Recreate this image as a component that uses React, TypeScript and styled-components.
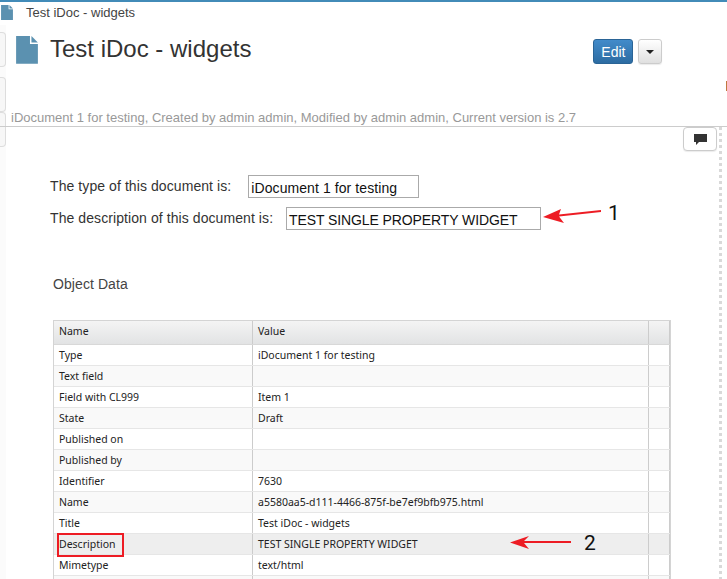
import styled, { createGlobalStyle } from "styled-components";

const rows = [
  { name: "Type", value: "iDocument 1 for testing" },
  { name: "Text field", value: "" },
  { name: "Field with CL999", value: "Item 1" },
  { name: "State", value: "Draft" },
  { name: "Published on", value: "" },
  { name: "Published by", value: "" },
  { name: "Identifier", value: "7630" },
  { name: "Name", value: "a5580aa5-d111-4466-875f-be7ef9bfb975.html" },
  { name: "Title", value: "Test iDoc - widgets" },
  { name: "Description", value: "TEST SINGLE PROPERTY WIDGET", selected: true },
  { name: "Mimetype", value: "text/html" },
  { name: "", value: "" },
];

const GlobalStyle = createGlobalStyle`
  html, body {
    margin: 0;
    padding: 0;
    background: #fff;
    overflow: hidden;
  }
`;

const DocIcon = ({ size }: { size: number }) => (
  <svg width={size} height={size * 1.26} viewBox="0 0 22 28">
    <path d="M0 0H14V8H22V28H0Z" fill="#5b91b0" />
    <path d="M15.5 0L22 6.5H15.5Z" fill="#5b91b0" />
  </svg>
);

const Arrow = ({ width, height, d }: { width: number; height: number; d: string }) => (
  <svg width={width} height={height} viewBox={`0 0 ${width} ${height}`}>
    <path d={d} fill="#ed1c24" />
  </svg>
);

const App = () => {
  return (
    <Page>
      <GlobalStyle />
      <TabBar>
        <DocIcon size={12} />
        <TabTitle>Test iDoc - widgets</TabTitle>
      </TabBar>
      <Main>
        <Rail>
          <RailTab $gap={0} />
          <RailTab $gap={10} />
          <RailTab $gap={0} />
        </Rail>
        <Content>
          <Header>
            <TitleRow>
              <DocIcon size={22} />
              <Title>Test iDoc - widgets</Title>
              <Actions>
                <EditButton>Edit</EditButton>
                <CaretButton>
                  <Caret />
                </CaretButton>
              </Actions>
            </TitleRow>
            <Meta>
              iDocument 1 for testing, Created by admin admin, Modified by admin admin, Current
              version is 2.7
            </Meta>
            <EdgeMark />
          </Header>
          <Body>
            <CommentBar>
              <CommentButton>
                <svg width="13" height="11" viewBox="0 0 13 11">
                  <path d="M0 0H13V8H5L2 11V8H0Z" fill="#333" />
                </svg>
              </CommentButton>
            </CommentBar>
            <Sentence $first>
              The type of this document is:
              <ValueBox $width={171} $gap={17} $spacing={0.08}>iDocument 1 for testing</ValueBox>
            </Sentence>
            <AnnotatedRow>
              <Sentence>
                The description of this document is:
                <ValueBox $width={255} $gap={13} $spacing={-0.1}>TEST SINGLE PROPERTY WIDGET</ValueBox>
              </Sentence>
              <ArrowSlot $x={2}>
                <Arrow width={60} height={14} d="M0 8L18 0L16 5.5L58 1L58 3L16 7.5L21 14Z" />
              </ArrowSlot>
              <Callout $x={5} $y={-4}>1</Callout>
            </AnnotatedRow>
            <SectionTitle>Object Data</SectionTitle>
            <Table>
              <HeadRow>
                <HeadCell $width={199}>Name</HeadCell>
                <HeadCell $width={396}>Value</HeadCell>
                <HeadCell $width={21} />
              </HeadRow>
              {rows.map((row, index) => (
                <Row key={index} $odd={index % 2 === 1} $selected={!!row.selected}>
                  <Cell $width={199}>
                    {row.name}
                    {row.selected && <Highlight />}
                  </Cell>
                  <Cell $width={396}>
                    {row.value}
                    {row.selected && (
                      <RowCallout>
                        <Arrow width={62} height={14} d="M0 6.5L19 0L14 5L61 5L61 7L14 7L19 13Z" />
                        <Callout $x={12} $y={0}>2</Callout>
                      </RowCallout>
                    )}
                  </Cell>
                  <Cell $width={21} />
                </Row>
              ))}
            </Table>
          </Body>
        </Content>
        <DottedEdge />
      </Main>
    </Page>
  );
};

export default App;

const Page = styled.div`
  width: 727px;
  height: 579px;
  overflow: hidden;
  background: #fff;
  border-top: 2px solid #428bb8;
  box-sizing: border-box;
  font-family: "Liberation Sans", Arial, sans-serif;
  color: #333;
`;

const TabBar = styled.div`
  display: flex;
  align-items: center;
  gap: 13px;
  height: 23px;
  margin-left: 1px;
  padding-bottom: 1px;
  box-sizing: border-box;
`;

const TabTitle = styled.span`
  margin-top: -2px;
  font-size: 13px;
  color: #444;
`;

const Main = styled.div`
  display: flex;
  height: 554px;
`;

const Rail = styled.div`
  flex: 0 0 6px;
  display: flex;
  flex-direction: column;
  padding-top: 7px;
  background: #fbfbfb;
`;

const RailTab = styled.div<{ $gap: number }>`
  height: 35px;
  margin-top: ${(p) => p.$gap}px;
  background: #f7f7f7;
  border: 1px solid #ddd;
  border-left: none;
  border-radius: 0 4px 4px 0;
  box-sizing: border-box;
`;

const Content = styled.div`
  flex: 0 0 712px;
  display: flex;
  flex-direction: column;
  min-width: 0;
`;

const Header = styled.div`
  height: 102px;
  margin-left: -6px;
  padding-left: 16px;
  border-bottom: 1px solid #ccc;
  position: relative;
  box-sizing: border-box;
  width: 727px;
`;

const TitleRow = styled.div`
  display: flex;
  align-items: flex-start;
  height: 85px;
  padding-top: 11px;
  box-sizing: border-box;
`;

const Title = styled.h1`
  margin: -1px 0 0 12px;
  font-size: 24px;
  font-weight: 400;
  line-height: 28px;
  color: #333;
`;

const Actions = styled.div`
  display: flex;
  gap: 5px;
  margin-left: 342px;
  margin-top: 3px;
`;

const EditButton = styled.button`
  width: 40px;
  height: 25px;
  padding: 0;
  border: 1px solid #2a6496;
  border-radius: 3px;
  background: linear-gradient(#428bca, #2d6ca2);
  color: #fff;
  font: 14px "Liberation Sans", Arial, sans-serif;
`;

const CaretButton = styled.button`
  width: 24px;
  height: 25px;
  padding: 0;
  display: flex;
  align-items: center;
  justify-content: center;
  border: 1px solid #ccc;
  border-radius: 3px;
  background: linear-gradient(#fff, #e0e0e0);
  box-shadow: 0 1px 1px rgba(0, 0, 0, 0.08);
`;

const Caret = styled.span`
  width: 0;
  height: 0;
  border-left: 4px solid transparent;
  border-right: 4px solid transparent;
  border-top: 4px solid #222;
`;

const Meta = styled.div`
  margin-left: -5px;
  font-size: 13px;
  line-height: 15px;
  color: #999;
  white-space: nowrap;
`;

const EdgeMark = styled.span`
  position: absolute;
  right: 0;
  top: 56px;
  width: 1px;
  height: 10px;
  background: #c07840;
`;

const Body = styled.div`
  flex: 1;
  min-height: 0;
  padding-left: 47px;
  position: relative;
`;

const CommentBar = styled.div`
  position: absolute;
  top: 0;
  right: 1px;
`;

const CommentButton = styled.div`
  width: 34px;
  height: 24px;
  display: flex;
  align-items: center;
  justify-content: center;
  background: #fff;
  border: 1px solid #ccc;
  border-radius: 4px;
  box-shadow: 0 1px 1px rgba(0, 0, 0, 0.08);
  box-sizing: border-box;
`;

const Sentence = styled.div<{ $first?: boolean }>`
  display: flex;
  align-items: flex-start;
  margin-top: ${(p) => (p.$first ? "48px" : "0")};
  margin-left: -3px;
  font-size: 14px;
  line-height: 22px;
  letter-spacing: 0.08px;
  color: #333;
  white-space: nowrap;
`;

const ValueBox = styled.div<{ $width: number; $gap: number; $spacing: number }>`
  width: ${(p) => p.$width}px;
  height: 23px;
  margin-left: ${(p) => p.$gap}px;
  padding: 1px 0 0 2px;
  border: 1px solid #aaa;
  box-sizing: border-box;
  letter-spacing: ${(p) => p.$spacing}px;
  color: #111;
`;

const AnnotatedRow = styled.div`
  display: flex;
  align-items: flex-start;
  margin-top: 9px;
`;

const ArrowSlot = styled.div<{ $x: number }>`
  margin: 2px 0 0 ${(p) => p.$x}px;
  display: flex;
`;

const Callout = styled.span<{ $x: number; $y: number }>`
  margin: ${(p) => p.$y}px 0 0 ${(p) => p.$x}px;
  font-family: Roboto, Arial, sans-serif;
  font-size: 21px;
  line-height: 20px;
  color: #111;
`;

const SectionTitle = styled.div`
  margin-top: 45px;
  font-size: 14px;
  line-height: 18px;
  letter-spacing: 0.08px;
  color: #444;
`;

const Table = styled.div`
  width: 618px;
  margin-top: 27px;
  border: 1px solid #d4d4d4;
  border-bottom: none;
  box-sizing: border-box;
  font-family: "Noto Sans", Tahoma, sans-serif;
  font-size: 10.5px;
  color: #222;
`;

const HeadRow = styled.div`
  display: flex;
  height: 24px;
  background: linear-gradient(#f4f4f4, #e2e3e4);
  border-bottom: 1px solid #d8d8d8;
  box-sizing: border-box;
`;

const HeadCell = styled.div<{ $width: number }>`
  flex: 0 0 ${(p) => p.$width}px;
  padding-left: 5px;
  line-height: 20px;
  border-right: 1px solid #ccc;
  box-sizing: border-box;
`;

const Row = styled.div<{ $odd: boolean; $selected: boolean }>`
  display: flex;
  height: 21px;
  border-bottom: 1px solid #e6e6e6;
  box-sizing: border-box;
  background: ${(p) => (p.$selected ? "#eee" : p.$odd ? "#f9f9f9" : "#fff")};
`;

const Cell = styled.div<{ $width: number }>`
  flex: 0 0 ${(p) => p.$width}px;
  position: relative;
  padding-left: 5px;
  line-height: 20px;
  border-right: 1px solid #ccc;
  box-sizing: border-box;
  white-space: nowrap;
`;

const Highlight = styled.span`
  position: absolute;
  left: 3px;
  top: -1px;
  width: 67px;
  height: 24px;
  border: 2px solid #ed1c24;
  box-sizing: border-box;
`;

const RowCallout = styled.span`
  position: absolute;
  left: 257px;
  top: -1px;
  display: flex;
  align-items: center;
`;

const DottedEdge = styled.div`
  flex: 0 0 3px;
  margin-left: 1px;
  margin-top: 102px;
  background: repeating-linear-gradient(#d9d9d9 0 3px, #fff 3px 6px);
`;
